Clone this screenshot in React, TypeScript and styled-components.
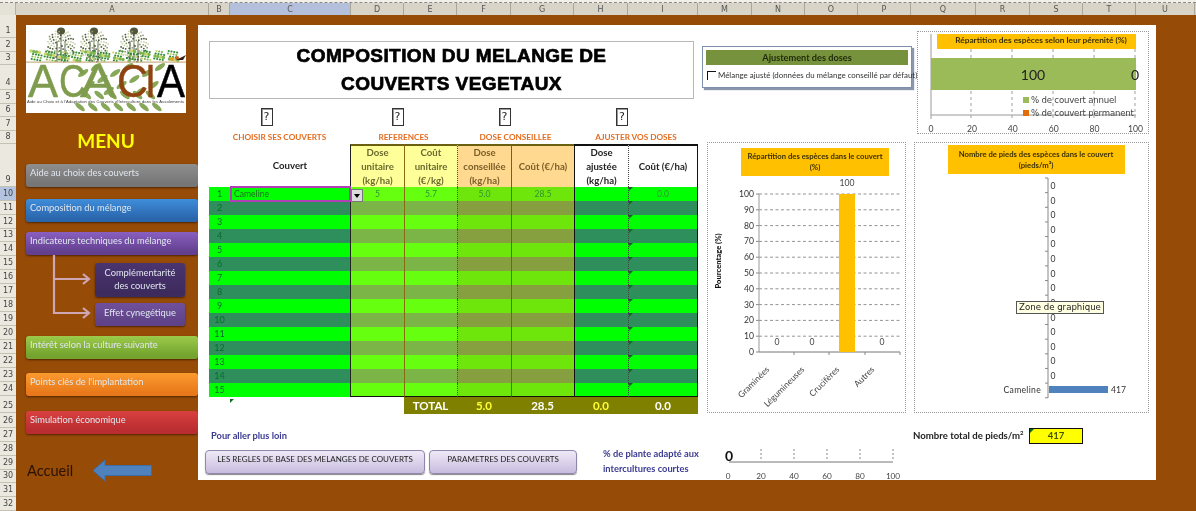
import React from "react";
import styled, { createGlobalStyle } from "styled-components";

const Global = createGlobalStyle`
  html, body { margin: 0; padding: 0; background: #964b07; overflow: hidden; }
  * { box-sizing: border-box; }
`;

const BROWN = "#964b07";
const COLS = "21px 120px 54px 53px 54px 63px 54px 70px";

const Root = styled.div`
  width: 1196px; height: 511px; display: flex; flex-direction: column; overflow: hidden;
  font-family: Lato, "Liberation Sans", sans-serif; filter: blur(0.3px); background: ${BROWN};
`;
const TopStrip = styled.div`height: 3px; background: #f1efe8; border-bottom: 1px dashed #888;`;
const ColBar = styled.div`display: flex; height: 12px; background: #d8d4c8; flex: none;`;
const Corner = styled.div`width: 16px; background: #e4e1d6; border-right: 1px solid #b5b1a4;`;
const ColHead = styled.div<{ $w: number; $on?: boolean }>`
  width: ${p => p.$w}px; display: flex; align-items: center; justify-content: center;
  font: 8px "DejaVu Sans", sans-serif; color: #555; border-right: 1px solid #aaa79a;
  background: ${p => (p.$on ? "#b4bfdb" : "transparent")};
`;
const Body = styled.div`display: flex; flex: 1; min-height: 0;`;
const Gutter = styled.div`width: 16px; flex: none; background: #ebe9df; display: flex; flex-direction: column;`;
const RowHead = styled.div<{ $h: number; $on?: boolean }>`
  height: ${p => p.$h}px; display: flex; align-items: flex-end; justify-content: center; padding-bottom: 2px;
  font: 8px "DejaVu Sans", sans-serif; color: #444; border-bottom: 1px solid #c5c2b5;
  background: ${p => (p.$on ? "#b4c4e0" : "transparent")};
`;
const Sheet = styled.div`flex: 1; display: flex; padding-top: 10px; background: ${BROWN};`;
const Sidebar = styled.nav`width: 182px; flex: none; padding-left: 10px; display: flex; flex-direction: column;`;
const LogoBox = styled.div`width: 160px; height: 88px; background: #fff; flex: none;`;
const MenuTitle = styled.div`
  width: 160px; height: 24px; margin-top: 16px; text-align: center; font-weight: 700; font-size: 19px;
  line-height: 24px; color: #ffff00;
`;
const MenuBtn = styled.div<{ $c1: string; $c2: string; $top: number; $h?: number; $center?: boolean }>`
  margin-top: ${p => p.$top}px; height: ${p => p.$h ?? 23}px; flex: none; border-radius: 3px;
  background: linear-gradient(${p => p.$c1} 0%, ${p => p.$c2} 85%);
  box-shadow: 0 1px 2px rgba(50, 20, 0, 0.7); padding: ${p => (p.$center ? "2.5px 3px" : "3px 4px")};
  color: #dfe6ee; font-size: 9.3px; line-height: ${p => (p.$center ? 13 : 12)}px; white-space: nowrap; text-align: ${p => (p.$center ? "center" : "left")};
`;
const SubMenu = styled.div`display: flex; flex: none; height: 71px;`;
const SubList = styled.div`display: flex; flex-direction: column; width: 90px; padding-top: 8px;`;
const HomeRow = styled.div`display: flex; align-items: center; margin-top: 25px; height: 23px; margin-left: 1px;`;
const HomeLabel = styled.span`font-size: 14.6px; color: #2a1204; width: 65px;`;

const Panel = styled.main`width: 958px; height: 455px; margin-left: 0; background: #fff; display: flex; flex: none;`;
const LeftCol = styled.section`width: 500px; flex: none; padding: 16px 0 0 11px; display: flex; flex-direction: column;`;
const TitleBox = styled.div`
  width: 485px; height: 58px; border: 1px solid #b8b8b8; display: flex; flex-direction: column; align-items: center;
  justify-content: center; text-align: center; color: #000;
`;
const TitleLine = styled.div`
  font: 900 19px/28px "Liberation Sans", sans-serif; -webkit-text-stroke: 0.7px #000; letter-spacing: 0.4px; white-space: nowrap;
`;
const HelpRow = styled.div`display: grid; grid-template-columns: 141px 107px 117px 124px; height: 19px; margin-top: 9px;`;
const HelpCell = styled.div<{ $shift: number }>`display: flex; justify-content: center; padding-right: ${p => p.$shift * 2}px;`;
const HelpIcon = styled.span`
  width: 12px; height: 18px; background: #fff; border: 1px solid #333; box-shadow: inset 1px 1px 0 #999;
  font: 11px/16px "DejaVu Sans", sans-serif; color: #222; text-align: center;
`;
const SectionRow = styled.div`display: grid; grid-template-columns: 141px 107px 117px 124px; height: 14px; margin-top: 3px;`;
const SectionLabel = styled.div`text-align: center; font-weight: 700; font-size: 8.2px; line-height: 14px; color: #e46c1f; white-space: nowrap;`;
const Grid = styled.div`display: grid; grid-template-columns: ${COLS}; grid-template-rows: 43px repeat(15, 14px) 17px; width: 489px; position: relative;`;

type Tone = "white" | "yellow" | "orange" | "none";
const headBg = { white: "#fff", yellow: "#ffff99", orange: "#ffd98f", none: "#fff" };
const headFg = { white: "#222", yellow: "#6a6a30", orange: "#7a5d28", none: "#222" };
const leftB = ["none", "none", "1.5px solid #222", "1px solid #8a6a10", "1px dotted #5a5a10", "1px solid #8a5a10", "1.5px solid #111", "1px dotted #444"];

const Head = styled.div<{ $t: Tone; $c: number }>`
  background: ${p => headBg[p.$t]}; color: ${p => headFg[p.$t]}; font-weight: 700; font-size: 9.6px; line-height: 14px;
  display: flex; align-items: center; justify-content: center; text-align: center; white-space: pre-line;
  border-left: ${p => leftB[p.$c]};
  border-top: ${p => (p.$c >= 6 ? "2px solid #111" : p.$c >= 2 ? "2px solid #6b6010" : "none")};
  border-right: ${p => (p.$c === 7 ? "1.5px solid #111" : "none")};
`;
const bodyBg = (c: number, even: boolean) => {
  if (c === 2 || c === 3) return even ? "#7cb547" : "#66ff0f";
  if (c === 4 || c === 5) return even ? "#86a03f" : "#6ee60b";
  return even ? "#2e8f5c" : "#00ff00";
};
const Cell = styled.div<{ $c: number; $even: boolean; $last: boolean }>`
  background: ${p => bodyBg(p.$c, p.$even)}; border-left: ${p => leftB[p.$c]};
  border-right: ${p => (p.$c === 7 ? "1.5px solid #111" : "none")};
  border-bottom: ${p => (p.$last && p.$c >= 2 ? "1.5px solid #111" : "none")};
  font-size: 8.6px; line-height: 14px; text-align: center; color: #2f962f; position: relative;
`;
const NumCell = styled(Cell)`color: #0c6a30; font-size: 9px;`;
const Mark = styled.i`
  position: absolute; left: 0; top: 0; width: 0; height: 0; border-top: 4px solid #0c6a20; border-right: 4px solid transparent;
`;
const Selected = styled.div`
  position: absolute; left: 21px; top: 42px; width: 121px; height: 16px; border: 2px solid #b23fb5; background: #00ff00;
  color: #1f6a20; font-size: 8.6px; line-height: 12px; padding-left: 2px;
`;
const DropBtn = styled.div`
  position: absolute; left: 142px; top: 45px; width: 12px; height: 13px; background: #dcdcdc; border: 1px solid #777;
  display: flex; align-items: center; justify-content: center;
  &::after { content: ""; border-left: 3.5px solid transparent; border-right: 3.5px solid transparent; border-top: 4px solid #000; }
`;
const Blank = styled.div<{ $span: number }>`grid-column: span ${p => p.$span}; position: relative;`;
const TotalCell = styled.div<{ $yellow?: boolean }>`
  background: #808000; color: ${p => (p.$yellow ? "#ffff33" : "#fff")}; font-weight: 700; font-size: 11.5px;
  display: flex; align-items: center; justify-content: center; position: relative;
`;
const MoreTitle = styled.div`margin-top: 15px; margin-left: 2px; height: 13px; font-weight: 700; font-size: 9.3px; line-height: 13px; color: #3a3a90;`;
const FootRow = styled.div`display: flex; margin-left: -4px; margin-top: 8px; position: relative;`;
const FootBtn = styled.div<{ $w: number }>`
  width: ${p => p.$w}px; height: 24px; margin-right: 4px; flex: none; border-radius: 4px; border: 1px solid #9187ad;
  background: linear-gradient(#efe9f6, #c8bcdf); box-shadow: 0 1px 1px #888; color: #222; font-size: 8px;
  line-height: 17px; text-align: center; white-space: nowrap;
`;
const FootNote = styled.div`
  margin-left: 22px; margin-top: -3px; font-weight: 700; font-size: 9.3px; line-height: 14.5px; color: #3a3a90; white-space: nowrap;
`;

const RightCol = styled.section`width: 458px; flex: none; display: flex; flex-direction: column;`;
const TopRow = styled.div`display: flex; height: 109px; flex: none;`;
const AdjustBox = styled.div`
  width: 210px; height: 42px; margin: 21px 0 0 4px; border: 1px solid #7f8fa9; box-shadow: 2px 2px 1px #8a96ad;
  background: #fff; padding: 3px 3px; position: relative;
`;
const AdjustHead = styled.div`
  height: 15px; background: #76923c; color: #1f2a0a; font-weight: 700; font-size: 9.2px; line-height: 15px; text-align: center;
`;
const AdjustLine = styled.div`display: flex; align-items: center; margin-top: 5px; white-space: nowrap; font-size: 7.9px; color: #333;`;
const Check = styled.span`width: 9px; height: 9px; border-left: 1px solid #111; border-top: 1px solid #111; margin: 0 2px 0 1px; flex: none;`;
const ChartFrame = styled.div<{ $w: number; $h: number; $ml: number; $mt?: number }>`
  width: ${p => p.$w}px; height: ${p => p.$h}px; margin-left: ${p => p.$ml}px; margin-top: ${p => p.$mt ?? 0}px;
  border: 1px dotted #999; flex: none; position: relative; background: #fff;
  svg { display: block; position: absolute; left: -1px; top: -1px; }
`;
const ChartsRow = styled.div`display: flex; margin-top: 8px; flex: none;`;
const BottomRow = styled.div`display: flex; margin-top: 15px; flex: none;`;
const SmallChart = styled.div`width: 180px; height: 36px; margin: 17px 0 0 27px; flex: none;`;
const TotalGroup = styled.div`display: flex; margin-left: 8px; height: 15px; align-items: center;`;
const TotalLabel = styled.div`width: 116px; font-weight: 700; font-size: 9.6px; color: #222; white-space: nowrap; sup { font-size: 6px; line-height: 0; }`;
const TotalBox = styled.div`
  width: 54px; height: 16px; background: #ffff00; border: 1.5px solid #111; font-weight: 700; font-size: 9.5px;
  text-align: center; line-height: 13px; color: #445000; position: relative;
`;
const Tooltip = styled.div`
  position: absolute; left: 101px; top: 158px; width: 88px; height: 13px; background: #ffffe1; border: 1px solid #555;
  font: 8.6px/11px "DejaVu Sans", sans-serif; color: #222; text-align: center; white-space: nowrap; z-index: 2;
`;

const columns: [string, number][] = [["A", 193], ["B", 21], ["C", 121], ["D", 53], ["E", 53], ["F", 54], ["G", 63], ["H", 54], ["I", 70], ["M", 54], ["N", 53], ["O", 53], ["P", 53], ["Q", 65], ["R", 54], ["S", 53], ["T", 53], ["U", 59]];
const rowHeights = [23, 14, 13, 25, 14, 13, 14, 13, 43, ...Array(15).fill(14), 17, 15, 14, 14, 14, 13, 14, 14];

const Logo = () => {
  const art: React.ReactNode[] = [];
  const plants = [35, 68, 108];
  plants.forEach((x, i) => {
    art.push(<path key={`st${i}`} d={`M${x} 37V5M${x - 4} 37V16M${x + 4} 37V16`} stroke="#4f5a40" strokeWidth="1" fill="none" />);
    art.push(<ellipse key={`h${i}`} cx={x} cy={6} rx={4} ry={3.5} fill="#55553a" />);
    for (let k = 0; k < 90; k++) {
      const a = k * 2.399;
      const r = 1 + Math.sqrt(k) * 1.4;
      art.push(<circle key={`p${i}-${k}`} cx={x + Math.cos(a) * r} cy={21 + Math.sin(a) * r * 1.15} r={0.9} fill={k % 3 === 0 ? "#4a5638" : k % 3 === 1 ? "#8b9a72" : "#c9d3a8"} />);
    }
  });
  for (let k = 0; k < 170; k++) {
    const x = 5 + ((k * 13.7) % 150);
    const y = 26 + ((k * 37) % 10.5);
    art.push(<circle key={`g${k}`} cx={x} cy={y} r={k % 4 ? 1.1 : 1.7} fill={k % 6 === 0 ? "#c9d66a" : k % 2 ? "#2f8a35" : "#7db650"} />);
  }
  const leaves: React.ReactNode[] = [];
  for (let k = 0; k < 26; k++) {
    const x = 54 + k * 3.2;
    const y = k % 2 ? 42 + (k % 5) * 6 : 82 - (k % 4) * 6;
    leaves.push(<ellipse key={`l${k}`} cx={x} cy={y} rx={6} ry={2.4} transform={`rotate(${k % 2 ? -35 : 40} ${x} ${y})`} fill="#86a858" />);
  }
  const letter = (c: string, x: number, w: number, fill: string) => (
    <text x={x} y={72} fontFamily="Liberation Sans" fontSize={47} fill={fill} stroke={fill} strokeWidth={0.5} textLength={w} lengthAdjust="spacingAndGlyphs">{c}</text>
  );
  return (
    <svg width="160" height="88" viewBox="0 0 160 88" style={{ display: "block" }}>
      {leaves}
      {art}
      <rect x="0" y="36.5" width="160" height="1.2" fill="#c8b080" />
      <circle cx="146" cy="34" r="2" fill="#e8a020" /><circle cx="151" cy="33" r="2" fill="#d06018" />
      <path d="M150 35l10-5-3 5z" fill="#3a2010" />
      {letter("A", 2, 30, "#7f9c4e")}{letter("C", 33, 27, "#7f9c4e")}{letter("A", 54, 36, "#7f9c4e")}
      {letter("C", 91, 31, "#8f4310")}{letter("I", 119, 11, "#8f4310")}{letter("A", 131, 28, "#000")}
      <text x="1" y="78" fontFamily="Liberation Sans" fontSize="4.1" fill="#333" textLength="157">Aide au Choix et à l'Adaptation des Couverts d'Interculture dans les Assolements</text>
    </svg>
  );
};

const Connector = () => (
  <svg width="69" height="71" viewBox="0 0 69 71" style={{ flex: "none" }}>
    <path d="M28 0V58H62M28 24H62M57 19l6 5-6 5M57 53l6 5-6 5" fill="none" stroke="#cfa6b4" strokeWidth="2.2" />
  </svg>
);

const PerennialChart = () => (
  <svg width="232" height="103" viewBox="917 31 232 103" fontFamily="Lato">
    {[971, 1012, 1053, 1094, 1135].map(x => <line key={x} x1={x} x2={x} y1="49" y2="118" stroke="#777" strokeDasharray="3 3" strokeWidth="0.7" />)}
    <line x1="931" x2="931" y1="34" y2="119" stroke="#999" />
    <line x1="931" x2="1136" y1="115" y2="115" stroke="#999" />
    <rect x="937" y="34" width="199" height="15" fill="#ffc000" />
    <text x="1041" y="43" textAnchor="middle" fontSize="8.3" fontWeight="700" fill="#3a3000">Répartition des espèces selon leur pérenité (%)</text>
    <rect x="931" y="58" width="205" height="32" fill="#9bbb59" />
    <text x="1033" y="80" textAnchor="middle" fontSize="14" fill="#222">100</text>
    <text x="1135" y="80" textAnchor="middle" fontSize="14" fill="#222">0</text>
    <rect x="1023" y="97" width="6" height="6" fill="#9bbb59" />
    <text x="1031" y="103" fontSize="8.6" fill="#444" fontFamily="DejaVu Sans" letterSpacing="-0.2">% de couvert annuel</text>
    <rect x="1023" y="110" width="6" height="6" fill="#e36c0a" />
    <text x="1031" y="116" fontSize="8.6" fill="#444" fontFamily="DejaVu Sans" letterSpacing="-0.2">% de couvert permanent</text>
    {[0, 20, 40, 60, 80, 100].map((v, i) => <text key={v} x={931 + i * 40.9} y="132" textAnchor="middle" fontSize="8.6" fill="#444">{v}</text>)}
  </svg>
);

const SpeciesChart = () => {
  const x0 = 759, x1 = 900, y0 = 352, yT = 194, step = (y0 - yT) / 10;
  const cats: [string, number, number][] = [["Graminées", 777, 0], ["Légumineuses", 812, 0], ["Crucifères", 847, 100], ["Autres", 882, 0]];
  return (
    <svg width="199" height="271" viewBox="707 142 199 271" fontFamily="Lato">
      <rect x="741" y="148" width="148" height="28" fill="#ffc000" />
      <text x="815" y="159" textAnchor="middle" fontSize="7.7" fontWeight="700" fill="#3a3000">Répartition des espèces dans le couvert</text>
      <text x="815" y="170" textAnchor="middle" fontSize="7.7" fontWeight="700" fill="#3a3000">(%)</text>
      {Array.from({ length: 11 }, (_, i) => {
        const y = y0 - i * step;
        return (
          <g key={i}>
            {i > 0 && <line x1={x0} x2={x1} y1={y} y2={y} stroke="#666" strokeDasharray="3 2.5" strokeWidth="0.7" />}
            <line x1={x0 - 3} x2={x0} y1={y} y2={y} stroke="#888" />
            <text x={x0 - 5} y={y + 3} textAnchor="end" fontSize="8.6" fill="#333">{i * 10}</text>
          </g>
        );
      })}
      <line x1={x0} x2={x0} y1={yT} y2={y0} stroke="#999" />
      <line x1={x0} x2={x1} y1={y0} y2={y0} stroke="#777" />
      <rect x="839" y={yT} width="16" height={y0 - yT} fill="#ffc000" />
      {[794, 829, 865, 900].map(x => <line key={x} x1={x} x2={x} y1={y0} y2={y0 + 3} stroke="#888" />)}
      {cats.map(([n, x, v]) => (
        <g key={n}>
          <text x={x} y={v ? yT - 8 : 345} textAnchor="middle" fontSize="8.6" fill="#444">{v}</text>
          <text transform={`translate(${x - 7} 370) rotate(-45)`} textAnchor="end" fontSize="8.6" fill="#444">{n}</text>
        </g>
      ))}
      <text transform="translate(721 261) rotate(-90)" textAnchor="middle" fontSize="7.6" fontWeight="900" fill="#111">Pourcentage (%)</text>
    </svg>
  );
};

const PlantsChart = () => (
  <svg width="235" height="271" viewBox="914 142 235 271" fontFamily="Lato">
    <rect x="948" y="145" width="177" height="29" fill="#ffc000" />
    <text x="1036" y="157" textAnchor="middle" fontSize="7.7" fontWeight="700" fill="#3a3000">Nombre de pieds des espèces dans le couvert</text>
    <text x="1036" y="168" textAnchor="middle" fontSize="7.7" fontWeight="700" fill="#3a3000">(pieds/m²)</text>
    <line x1="1048" x2="1048" y1="178" y2="398" stroke="#888" />
    {Array.from({ length: 16 }, (_, i) => <line key={i} x1="1045" x2="1048" y1={178 + i * 14.65} y2={178 + i * 14.65} stroke="#888" />)}
    {Array.from({ length: 14 }, (_, i) => <text key={i} x="1053" y={189 + i * 14.62} textAnchor="middle" fontSize="8.6" fill="#333">0</text>)}
    <text x="1041" y="393" textAnchor="end" fontSize="8.6" fill="#333" letterSpacing="0.3">Cameline</text>
    <rect x="1049" y="386" width="59" height="7" fill="#4f81bd" />
    <text x="1111" y="393" fontSize="8.6" fill="#333">417</text>
  </svg>
);

const AdaptedChart = () => (
  <svg width="180" height="36" viewBox="725 445 180 36" fontFamily="Lato" style={{ display: "block" }}>
    {[761, 794, 827, 860, 893].map(x => <line key={x} x1={x} x2={x} y1="449" y2="461" stroke="#888" strokeDasharray="2 2" />)}
    <line x1="729" x2="893" y1="462" y2="462" stroke="#777" />
    <text x="729" y="461" textAnchor="middle" fontSize="14" fontWeight="700" fill="#111">0</text>
    {[0, 20, 40, 60, 80, 100].map((v, i) => <text key={v} x={728 + i * 33} y="479" textAnchor="middle" fontSize="8.2" fill="#444">{v}</text>)}
  </svg>
);

const heads: [string, Tone][] = [["", "none"], ["Couvert", "none"], ["Dose\nunitaire\n(kg/ha)", "yellow"], ["Coût\nunitaire\n(€/kg)", "yellow"], ["Dose\nconseillée\n(kg/ha)", "orange"], ["Coût (€/ha)", "orange"], ["Dose\najustée\n(kg/ha)", "white"], ["Coût (€/ha)", "white"]];
const firstRow = ["", "", "5", "5.7", "5.0", "28.5", "", "0.0"];

export default function App() {
  return (
    <Root>
      <Global />
      <TopStrip />
      <ColBar>
        <Corner />
        {columns.map(([n, w]) => <ColHead key={n} $w={w} $on={n === "C"}>{n}</ColHead>)}
      </ColBar>
      <Body>
        <Gutter>
          {rowHeights.map((h, i) => <RowHead key={i} $h={h} $on={i === 9}>{i + 1}</RowHead>)}
        </Gutter>
        <Sheet>
          <Sidebar>
            <LogoBox><Logo /></LogoBox>
            <MenuTitle>MENU</MenuTitle>
            <MenuBtn $c1="#8e8e8e" $c2="#767676" $top={11}>Aide au choix des couverts</MenuBtn>
            <MenuBtn $c1="#3f8ddb" $c2="#2a66ac" $top={12}>Composition du mélange</MenuBtn>
            <MenuBtn $c1="#8a5fc0" $c2="#63408f" $top={10}>Indicateurs techniques du mélange</MenuBtn>
            <SubMenu>
              <Connector />
              <SubList>
                <MenuBtn $c1="#4a3570" $c2="#3e2b5e" $top={0} $h={34} $center>Complémentarité<br />des couverts</MenuBtn>
                <MenuBtn $c1="#70509c" $c2="#5f4287" $top={6} $center>Effet cynegétique</MenuBtn>
              </SubList>
            </SubMenu>
            <MenuBtn $c1="#9ccb4a" $c2="#74a32f" $top={10}>Intérêt selon la culture suivante</MenuBtn>
            <MenuBtn $c1="#fb9a2e" $c2="#e8791a" $top={14}>Points clés de l'implantation</MenuBtn>
            <MenuBtn $c1="#d8403f" $c2="#b92d30" $top={15}>Simulation économique</MenuBtn>
            <HomeRow>
              <HomeLabel>Accueil</HomeLabel>
              <svg width="60" height="23" viewBox="0 0 60 23">
                <path d="M1 11.5L13 1v5.5H59.5v10H13V22z" fill="#4f81bd" stroke="#3d6da8" />
              </svg>
            </HomeRow>
          </Sidebar>
          <Panel>
            <LeftCol>
              <TitleBox>
                <TitleLine>COMPOSITION DU MELANGE DE</TitleLine>
                <TitleLine>COUVERTS VEGETAUX</TitleLine>
              </TitleBox>
              <HelpRow>
                {[13, 6, 11, 14].map((s, i) => <HelpCell key={i} $shift={s}><HelpIcon>?</HelpIcon></HelpCell>)}
              </HelpRow>
              <SectionRow>
                <SectionLabel>CHOISIR SES COUVERTS</SectionLabel>
                <SectionLabel>REFERENCES</SectionLabel>
                <SectionLabel>DOSE CONSEILLEE</SectionLabel>
                <SectionLabel>AJUSTER VOS DOSES</SectionLabel>
              </SectionRow>
              <Grid>
                {heads.map(([t, tone], c) => <Head key={c} $t={tone} $c={c}>{t}</Head>)}
                {Array.from({ length: 15 }, (_, r) => heads.map((_, c) => {
                  const even = r % 2 === 1;
                  const props = { $c: c, $even: even, $last: r === 14 };
                  if (c === 0) return <NumCell key={`${r}-${c}`} {...props}>{r + 1}</NumCell>;
                  return (
                    <Cell key={`${r}-${c}`} {...props}>
                      {r === 0 ? firstRow[c] : ""}
                      {c === 7 && <Mark />}
                    </Cell>
                  );
                }))}
                <Blank $span={3}><Mark style={{ left: 21, top: 2 }} /></Blank>
                <TotalCell>TOTAL</TotalCell>
                <TotalCell $yellow>5.0</TotalCell>
                <TotalCell>28.5</TotalCell>
                <TotalCell $yellow>0.0</TotalCell>
                <TotalCell>0.0</TotalCell>
                <Selected>Cameline</Selected>
                <DropBtn />
              </Grid>
              <MoreTitle>Pour aller plus loin</MoreTitle>
              <FootRow>
                <FootBtn $w={220}>LES REGLES DE BASE DES MELANGES DE COUVERTS</FootBtn>
                <FootBtn $w={148}>PARAMETRES DES COUVERTS</FootBtn>
                <FootNote>% de plante adapté aux<br />intercultures courtes</FootNote>
              </FootRow>
            </LeftCol>
            <RightCol>
              <TopRow>
                <AdjustBox>
                  <AdjustHead>Ajustement des doses</AdjustHead>
                  <AdjustLine><Check />Mélange ajusté (données du mélange conseillé par défaut)</AdjustLine>
                </AdjustBox>
                <ChartFrame $w={232} $h={103} $ml={5} $mt={6}><PerennialChart /></ChartFrame>
              </TopRow>
              <ChartsRow>
                <ChartFrame $w={199} $h={271} $ml={9}><SpeciesChart /></ChartFrame>
                <ChartFrame $w={235} $h={271} $ml={8}>
                  <PlantsChart />
                  <Tooltip>Zone de graphique</Tooltip>
                </ChartFrame>
              </ChartsRow>
              <BottomRow>
                <SmallChart><AdaptedChart /></SmallChart>
                <TotalGroup>
                  <TotalLabel>Nombre total de pieds/m<sup>2</sup></TotalLabel>
                  <TotalBox><Mark />417</TotalBox>
                </TotalGroup>
              </BottomRow>
            </RightCol>
          </Panel>
        </Sheet>
      </Body>
    </Root>
  );
}
